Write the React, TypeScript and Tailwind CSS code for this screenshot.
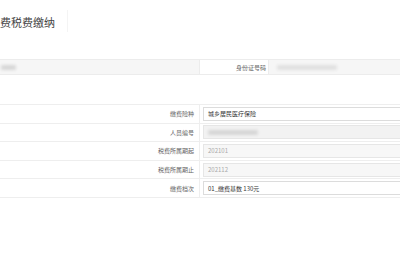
import React from "react";

const font = { fontFamily: '"Noto Sans CJK SC", "Noto Sans", sans-serif' };

function Blur({ w, className = "" }: { w: number; className?: string }) {
  return (
    <div
      className={"h-[5px] rounded-[2px] bg-[#d6d6d6] blur-[1.5px] " + className}
      style={{ width: w }}
    />
  );
}

const rows: { label: string; value: React.ReactNode; box: string; text: string }[] = [
  { label: "缴费险种", value: "城乡居民医疗保险", box: "bg-white border-[#dcdcdc]", text: "text-[#333]" },
  { label: "人员编号", value: <Blur w={50} />, box: "bg-[#f2f2f2] border-[#e6e6e6]", text: "" },
  { label: "税费所属期起", value: "202101", box: "bg-[#f7f7f7] border-[#e6e6e6]", text: "text-[#aaa]" },
  { label: "税费所属期止", value: "202112", box: "bg-[#f7f7f7] border-[#e6e6e6]", text: "text-[#aaa]" },
  { label: "缴费档次", value: "01_缴费基数 130元", box: "bg-white border-[#dcdcdc]", text: "text-[#333]" },
];

export default function App() {
  return (
    <div className="w-[400px] h-[260px] bg-white overflow-hidden" style={font}>
      <div className="flex h-[59px]">
        <div className="pt-[14px] text-[11px] leading-[16px] text-[#444]">费税费缴纳</div>
        <div className="ml-[12px] mt-[10px] w-px h-[22px] bg-[#f4f4f4]" />
      </div>
      <div className="flex h-[16px] border-y border-[#ececec] bg-[#f6f6f6]">
        <div className="w-[199px] flex items-center pl-[1px]">
          <Blur w={15} />
        </div>
        <div className="w-[70px] bg-white border-x border-[#ececec] flex items-center justify-end pr-[2px] text-[6px] text-[#666]">
          身份证号码
        </div>
        <div className="flex-1 flex items-center pl-[8px]">
          <Blur w={60} className="bg-[#e0e0e0]" />
        </div>
      </div>
      <div className="mt-[29px] border-t border-[#eeeeee]">
        {rows.map((r) => (
          <div key={r.label} className="flex h-[18.6px] border-b border-[#eeeeee]">
            <div className="w-[200px] border-r border-[#eeeeee] flex items-center justify-end pr-[5px] text-[6px] text-[#666]">
              {r.label}
            </div>
            <div className="flex-1 flex items-center pl-[3px] overflow-hidden">
              <div
                className={
                  "w-[220px] shrink-0 h-[14px] border flex items-center pl-[4px] text-[6px] " +
                  r.box +
                  " " +
                  r.text
                }
              >
                {r.value}
              </div>
            </div>
          </div>
        ))}
      </div>
    </div>
  );
}
